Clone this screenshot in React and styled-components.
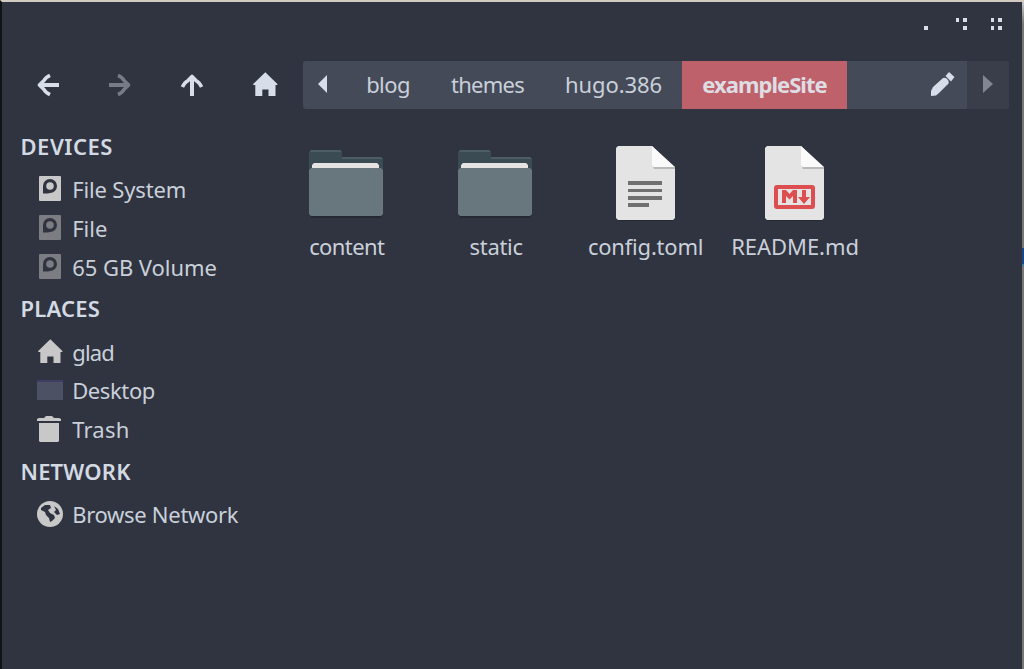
import React from "react";
import styled, { createGlobalStyle } from "styled-components";

const Global = createGlobalStyle`
  * { box-sizing: border-box; }
  body { margin: 0; background: #303440; }
`;

const Window = styled.main`
  width: 1024px;
  height: 669px;
  display: flex;
  flex-direction: column;
  overflow: hidden;
  background: #303440;
  border-top: 2px solid #d2cbc2;
  border-left: 2px solid #111214;
  color: #c9d0da;
  font: 22px/30px "Noto Sans", "Open Sans", sans-serif;
  position: relative;
`;
const EdgeStrip = styled.div`
  position: absolute;
  right: 0;
  top: 0;
  bottom: 0;
  width: 2px;
  background: linear-gradient(#c8c8c8 0, #777 22px, #777 246px, #1c4587 246px, #1c4587 262px, #3b7ca0 262px, #3b7ca0 264px, #777 264px);
`;
const TitleBar = styled.header`
  height: 58px;
  display: flex;
  justify-content: flex-end;
  padding: 16px 22px 0 0;
`;
const WindowButtons = styled.svg`
  display: block;
`;
const Toolbar = styled.nav`
  height: 49px;
  display: flex;
  align-items: center;
  padding-right: 15px;
`;
const NavButtons = styled.div`
  width: 301px;
  display: flex;
  align-items: center;
  gap: 48px;
  padding-left: 34px;
`;
const Icon = styled.svg`
  display: block;
  flex: none;
`;
const PathBar = styled.div`
  height: 48px;
  flex: 1;
  display: flex;
  border-radius: 3px;
  overflow: hidden;
  background: #454a58;
`;
const PathButton = styled.button`
  width: ${(p) => p.$w}px;
  border: 0;
  padding: 0 0 1px ${(p) => p.$inset || 0}px;
  display: flex;
  align-items: center;
  justify-content: center;
  font: inherit;
  font-weight: ${(p) => (p.$active ? 700 : 400)};
  letter-spacing: ${(p) => p.$ls || 0}px;
  color: ${(p) => (p.$active ? "#dfdde4" : "inherit")};
  background: ${(p) => (p.$active ? "#be616b" : p.$dim ? "#3a3e4a" : "transparent")};
`;
const EditButton = styled(PathButton)`
  margin-left: auto;
`;
const Body = styled.div`
  flex: 1;
  display: flex;
`;
const Sidebar = styled.aside`
  width: 269px;
  padding-top: 14px;
`;
const Heading = styled.h2`
  height: 46px;
  margin: 0;
  padding-left: 18.5px;
  font-size: 22px;
  line-height: 46px;
  font-weight: 600;
  color: #d3dae3;
  letter-spacing: ${(p) => p.$ls}px;
`;
const Item = styled.div`
  height: 38.8px;
  display: flex;
  align-items: center;
  gap: 9.2px;
  padding: 1.6px 0 0 35px;
  letter-spacing: ${(p) => p.$ls || 0}px;
  white-space: nowrap;
`;
const Files = styled.section`
  flex: 1;
  display: flex;
  align-items: flex-start;
  padding-top: 36px;
`;
const File = styled.figure`
  width: 149.45px;
  margin: 0;
  display: flex;
  flex-direction: column;
  align-items: center;
  gap: 10px;
`;
const Caption = styled.figcaption`
  padding-left: 2px;
  letter-spacing: ${(p) => p.$ls || 0}px;
  white-space: nowrap;
`;

const BackIcon = ({ flip, dim }) => (
  <Icon width="24" height="24" viewBox="0 0 24 24" fill="none" stroke={dim ? "#767b87" : "#d8dee9"}>
    <g transform={flip ? "translate(24 0) scale(-1 1)" : undefined}>
      <path strokeWidth="4" d="M23 12H4" />
      <path strokeWidth="3.6" strokeLinejoin="round" d="M14 2.4Q9.500 4.500 8 7.500L3.400 12L8 16.500Q9.500 19.500 14 21.600" />
    </g>
  </Icon>
);
const UpIcon = () => (
  <Icon width="24" height="24" viewBox="0 0 24 24" fill="none" stroke="#d8dee9">
    <path strokeWidth="4" d="M12 23V4" />
    <path strokeWidth="3.6" strokeLinejoin="round" d="M2.400 14Q4.500 9.500 7.500 8L12 3.400L16.500 8Q19.500 9.500 21.600 14" />
  </Icon>
);
const HomeIcon = ({ color }) => (
  <Icon width="26" height="26" viewBox="0 0 26 26" fill={color}>
    <path d="M13.300 0.200L25.400 12V13H23.500V24H16.500V17.500H10.300V24H3.300V13H1.200V12Z" />
  </Icon>
);
const DiskIcon = ({ dim }) => (
  <Icon width="26" height="26" viewBox="0 0 26 26">
    <rect x="2" width="22" height="25" rx="1" fill={dim ? "#7c7d82" : "#c8c8c8"} />
    <path d="M6 17.500V10A7 7 0 1 1 13 17L11 17.500Z" fill="#303440" />
    <circle cx="13" cy="10" r="3.8" fill={dim ? "#7c7d82" : "#c8c8c8"} />
  </Icon>
);
const DesktopIcon = () => (
  <Icon width="26" height="26" viewBox="0 0 26 26">
    <path fill="#4c5263" d="M0 3H26V23H0Z" />
    <path fill="#403e66" d="M0 3H26V5H0Z" />
  </Icon>
);
const TrashIcon = () => (
  <Icon width="26" height="26" viewBox="0 0 26 26" fill="#c8c8c8">
    <path d="M0 5V3L2 2H7L9 0H15L17 2H22L24 3V5ZM2 7H22V25L21 26H3L2 25Z" />
  </Icon>
);
const GlobeIcon = () => (
  <Icon width="26" height="26" viewBox="0 0 26 26">
    <circle cx="13" cy="13" r="13" fill="#c8c8c8" />
    <path fill="#303440" d="M4 7L8 4L13 4L14 7L11 9L13 12L17 14L18 17L15 20L13 21L12 17L9 14L8 11L4 9ZM17 5L21 8L23 13L20 14L17 11L19 9Z" />
  </Icon>
);
const FolderIcon = () => (
  <Icon width="76" height="76" viewBox="0 0 76 76">
    <path fill="#252932" d="M2 70H74V71L73 73H3Z" />
    <path fill="#3b4b53" d="M1 25V7L3 5H32L34 7V12H73L75 14V25Z" />
    <path fill="#4d5d65" d="M3 5H32L34 7H2ZM34 12H73L75 14H34Z" />
    <path fill="#e6e4e3" d="M4 24V20L6 18H69L71 20V24Z" />
    <path fill="#68777d" d="M1 25L3 23H73L75 25V69L73 71H3L1 69Z" />
  </Icon>
);
const DocumentIcon = ({ markdown }) => (
  <Icon width="76" height="76" viewBox="0 0 76 76">
    <path fill="#252932" d="M10 73H67L66 76H11Z" />
    <path fill="#e4e4e4" d="M9 3L11 1H45L68 23V73L66 75H11L9 73Z" />
    <path fill="#b9b9b9" d="M46 22H68V24H47Z" />
    <path fill="#fafafa" d="M45 1L68 22H47L45 20Z" />
    {markdown ? (
      <>
        <rect x="20" y="42" width="37" height="20" rx="1" fill="none" stroke="#dc4e50" strokeWidth="4" />
        <path fill="#dc4e50" d="M26 58V45H30L33.5 49L37 45H41V58H37V51L33.5 54.5L30 51V58ZM46 45H50V52H54L48 59L42 52H46Z" />
      </>
    ) : (
      <path fill="#707070" d="M21 36H55V40H21ZM21 44H55V47H21ZM21 51H55V55H21ZM21 58H42V62H21Z" />
    )}
  </Icon>
);
const TriangleIcon = ({ right }) => (
  <Icon width="10" height="18" viewBox="0 0 10 18" fill={right ? "#828692" : "#d8dee9"}>
    <path d={right ? "M0 0L10 9L0 18Z" : "M9 0V18L0 9Z"} />
  </Icon>
);
const PencilIcon = () => (
  <Icon width="24" height="24" viewBox="0 0 24 24" fill="#d8dee9">
    <path d="M0 24V19L2 15L12 6Q15 5 17 8T16 13L8 21L5 23.500ZM14.500 4L18 0L23.500 5L20 9.500Z" />
  </Icon>
);

const sections = [
  { title: "DEVICES", ls: 0.5, items: [
    { name: "File System", icon: <DiskIcon />, ls: -0.15 },
    { name: "File", icon: <DiskIcon dim />, ls: 0 },
    { name: "65 GB Volume", icon: <DiskIcon dim />, ls: -0.05 },
  ] },
  { title: "PLACES", ls: 0.2, items: [
    { name: "glad", icon: <HomeIcon color="#c8c8c8" />, ls: -0.8 },
    { name: "Desktop", icon: <DesktopIcon />, ls: -0.4 },
    { name: "Trash", icon: <TrashIcon />, ls: 0.2 },
  ] },
  { title: "NETWORK", ls: 0.2, items: [
    { name: "Browse Network", icon: <GlobeIcon />, ls: -0.3 },
  ] },
];
const crumbs = [
  { name: "blog", w: 86, ls: -0.6, inset: 4 },
  { name: "themes", w: 113, ls: -0.75, inset: 4 },
  { name: "hugo.386", w: 140, ls: -0.1, inset: 3 },
  { name: "exampleSite", w: 165, ls: -0.95, active: true },
];
const files = [
  { name: "content", icon: <FolderIcon />, ls: -0.6 },
  { name: "static", icon: <FolderIcon />, ls: -0.3 },
  { name: "config.toml", icon: <DocumentIcon />, ls: -0.2 },
  { name: "README.md", icon: <DocumentIcon markdown />, ls: -0.05 },
];

export default function App() {
  return (
    <Window>
      <Global />
      <TitleBar>
        <WindowButtons width="80" height="14" fill="#d8dee9">
          <path d="M2 8h4v4h-4zM34 0h3v4h-3zM41 0h4v4h-4zM41 8h4v4h-4zM69 0h3v4h-3zM76 0h4v4h-4zM69 8h3v4h-3zM76 8h4v4h-4z" />
        </WindowButtons>
      </TitleBar>
      <Toolbar>
        <NavButtons>
          <BackIcon />
          <BackIcon flip dim />
          <UpIcon />
          <HomeIcon color="#d8dee9" />
        </NavButtons>
        <PathBar>
          <PathButton $w={40}><TriangleIcon /></PathButton>
          {crumbs.map((c) => (
            <PathButton key={c.name} $w={c.w} $ls={c.ls} $inset={c.inset} $active={c.active}>{c.name}</PathButton>
          ))}
          <EditButton $w={48}><PencilIcon /></EditButton>
          <PathButton $w={42} $dim><TriangleIcon right /></PathButton>
        </PathBar>
      </Toolbar>
      <Body>
        <Sidebar>
          {sections.map((s) => (
            <React.Fragment key={s.title}>
              <Heading $ls={s.ls}>{s.title}</Heading>
              {s.items.map((i) => (
                <Item key={i.name} $ls={i.ls}>{i.icon}<span>{i.name}</span></Item>
              ))}
            </React.Fragment>
          ))}
        </Sidebar>
        <Files>
          {files.map((f) => (
            <File key={f.name}>{f.icon}<Caption $ls={f.ls}>{f.name}</Caption></File>
          ))}
        </Files>
      </Body>
      <EdgeStrip />
    </Window>
  );
}
